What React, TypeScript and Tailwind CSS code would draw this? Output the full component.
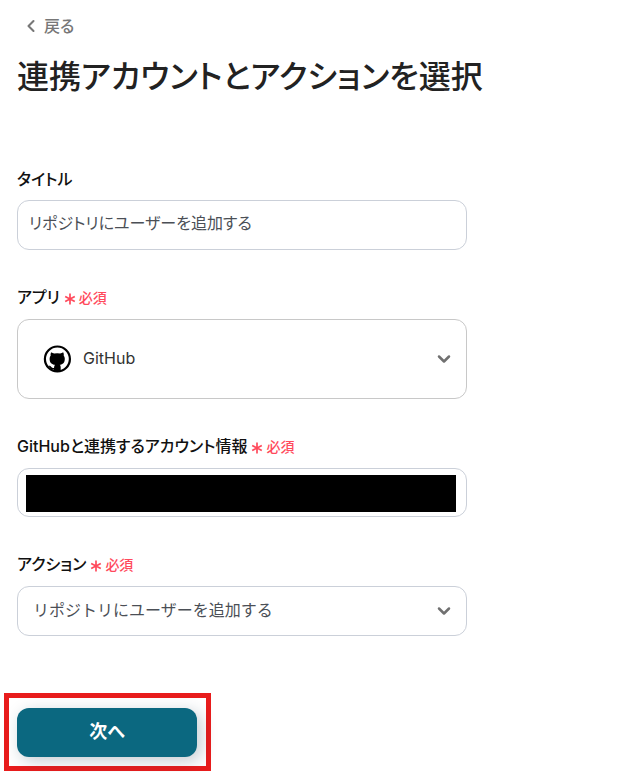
import { useState, type ReactNode } from "react";
import { ChevronDown, ChevronLeft } from "lucide-react";

const boxClass =
  "w-full rounded-xl border border-[#cbd0d9] bg-white text-base text-[#4b4f56]";

function Required() {
  return (
    <span className="ml-1 flex items-center gap-[3px] pt-px text-[14px] font-medium text-[#ff4a5c]">
      <svg
        viewBox="0 0 12 12"
        className="mt-0.5 h-3 w-3"
        stroke="currentColor"
        strokeWidth="1.7"
        aria-hidden="true"
      >
        <path d="M6 0.600V11.400M1.200 3.400L10.800 8.600M10.800 3.400L1.200 8.600" />
      </svg>
      必須
    </span>
  );
}

function Field({
  id,
  label,
  required = false,
  children,
}: {
  id: string;
  label: string;
  required?: boolean;
  children: ReactNode;
}) {
  return (
    <div className="flex flex-col gap-2">
      <label
        htmlFor={id}
        className={`flex h-6 items-center text-base font-medium text-[#111] ${required ? "pb-1" : "pb-0.5"}`}
      >
        {label}
        {required && <Required />}
      </label>
      {children}
    </div>
  );
}

function Chevron() {
  return (
    <ChevronDown
      className="pointer-events-none absolute top-1/2 right-[13px] h-5 w-5 -translate-y-1/2 text-[#707070]"
      strokeWidth={3}
      aria-hidden="true"
    />
  );
}

function GitHubMark() {
  return (
    <svg
      viewBox="0 0 28 28"
      className="pointer-events-none absolute top-1/2 left-[26px] h-7 w-7 -translate-y-1/2"
      aria-hidden="true"
    >
      <circle cx="14.400" cy="14" r="12.500" fill="white" stroke="black" strokeWidth="2.200" />
      <path
        d="M8 7.400c1 0 2.300.6 3.200 1.200a13 13 0 0 1 6 0c.9-.6 2.200-1.200 3.200-1.200.5 1.100.5 2.200.3 3.200.7.900 1.100 1.900 1.100 3.100 0 4.200-2.100 5.700-5 6.100.6.600.9 1.400.9 2.400v4.300a13 13 0 0 1-6.800 0v-2c-2.800.4-3.500-1.200-4.200-2.300-.4-.6-1-.9-1.400-1.200 1.600-.5 2.600.4 3.300 1.300.6.800 1.300.9 2.400.6.100-1.100.3-2.300.9-3.100-2.900-.4-5.300-1.900-5.300-6.100 0-1.200.4-2.200 1.100-3.100-.3-1-.2-2.100.3-3.200z"
        fill="black"
      />
    </svg>
  );
}

export default function App() {
  const [title, setTitle] = useState("リポジトリにユーザーを追加する");

  return (
    <main className="min-h-screen bg-white pt-3 font-['Inter','Noto_Sans_CJK_JP',sans-serif] [font-feature-settings:'palt']">
      <header className="px-[17px]">
        <button
          type="button"
          className="ml-1 flex h-7 items-center gap-[3px] text-base font-medium text-[#777]"
        >
          <ChevronLeft className="h-5 w-5" strokeWidth={2.5} aria-hidden="true" />
          戻る
        </button>
        <h1 className="mt-[13px] text-[32px] leading-[48px] font-medium text-[#222]">
          連携アカウントとアクションを選択
        </h1>
      </header>

      <form onSubmit={(e) => e.preventDefault()}>
        <div className="mt-[67px] flex w-full max-w-[484px] flex-col gap-[37px] px-[17px]">
          <Field id="title" label="タイトル">
            <input
              id="title"
              type="text"
              value={title}
              onChange={(e) => setTitle(e.target.value)}
              className={`${boxClass} h-[50px] px-[11px] pb-1.5`}
            />
          </Field>

          <Field id="app" label="アプリ" required>
            <div className="relative">
              <select
                id="app"
                className="h-20 w-full appearance-none rounded-xl border border-[#c8c8c8] bg-white pr-10 pb-0.5 pl-[65px] text-base text-[#333]"
              >
                <option>GitHub</option>
              </select>
              <GitHubMark />
              <Chevron />
            </div>
          </Field>

          <Field id="account" label="GitHubと連携するアカウント情報" required>
            <div className={`${boxClass} flex h-[49px] items-center pt-px pr-2.5 pl-2`}>
              <input
                id="account"
                type="text"
                readOnly
                className="h-[37px] w-full bg-black"
              />
            </div>
          </Field>

          <Field id="action" label="アクション" required>
            <div className="relative">
              <select
                id="action"
                className={`${boxClass} h-[50px] appearance-none pr-10 pb-0.5 pl-[15px] [font-feature-settings:normal]`}
              >
                <option>リポジトリにユーザーを追加する</option>
              </select>
              <Chevron />
            </div>
          </Field>
        </div>

        <div className="mt-[57px] ml-1 w-fit border-[5px] border-[#e81c1c] pt-2.5 pr-[9px] pb-[9px] pl-2">
          <button
            type="submit"
            className="block h-[49px] w-[180px] rounded-xl bg-[#0b6880] pb-0.5 text-lg font-bold text-white shadow-[4px_4px_16px_rgba(20,50,70,0.25)]"
          >
            次へ
          </button>
        </div>
      </form>
    </main>
  );
}
